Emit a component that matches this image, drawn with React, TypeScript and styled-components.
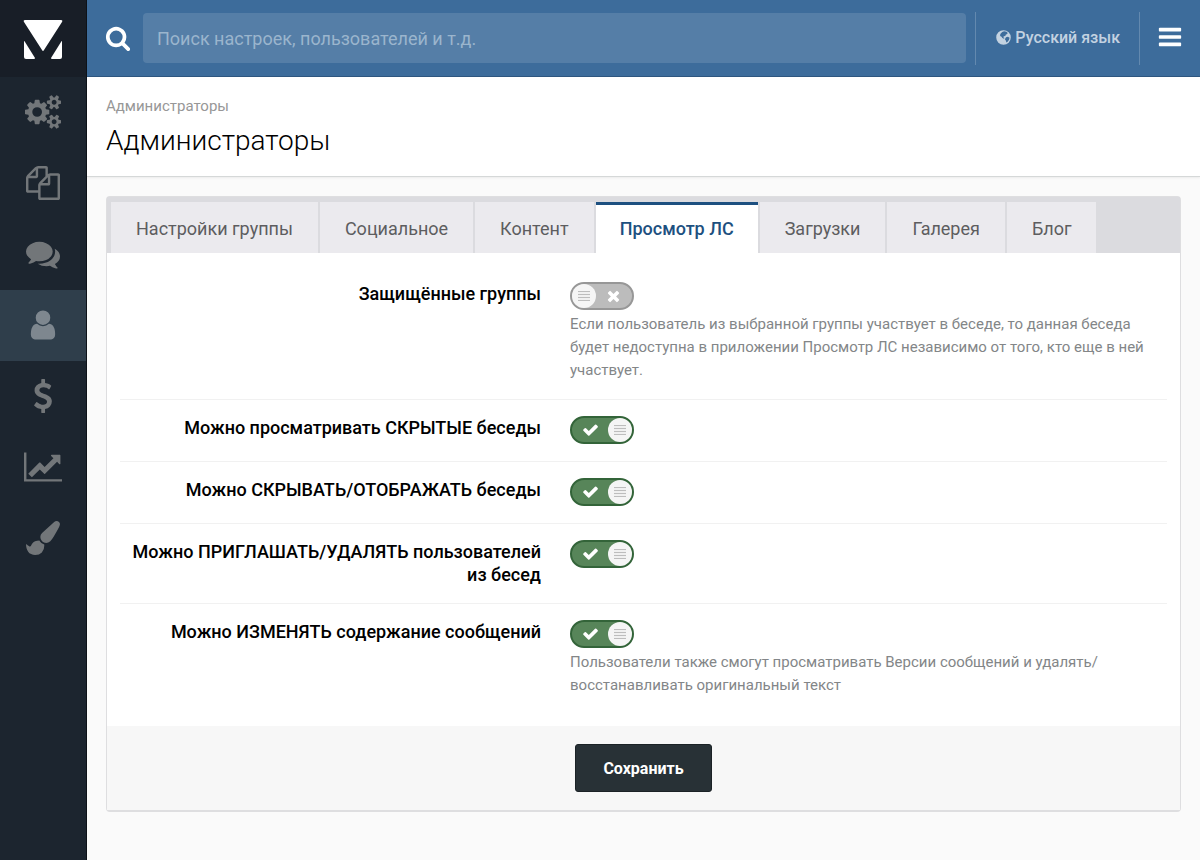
import React, { useState } from 'react';
import styled, { createGlobalStyle, css } from 'styled-components';

const GlobalStyle = createGlobalStyle`
  *, *::before, *::after { box-sizing: border-box; }
  body {
    margin: 0;
    background: #fafafa;
    color: #000;
    font-family: Roboto, "Noto Sans", sans-serif;
    font-size: 15px;
    line-height: 23px;
  }
  button, input { font-family: inherit; }
`;

type Glyph = { box: string; d: string };

const SQUARE = '0 0 1792 1792';

const glyphs: Record<string, Glyph> = {
  search: {
    box: SQUARE,
    d: 'M1216 832q0-185-131.5-316.5t-316.5-131.5-316.5 131.5-131.5 316.5 131.5 316.5 316.5 131.5 316.5-131.5 131.5-316.5zm512 832q0 52-38 90t-90 38q-54 0-90-38l-343-342q-179 124-399 124-143 0-273.5-55.5t-225-150-150-225-55.5-273.5 55.5-273.5 150-225 225-150 273.5-55.5 273.5 55.5 225 150 150 225 55.5 273.5q0 220-124 399l343 343q37 37 37 90z',
  },
  cogs: {
    box: '-64 0 1920 1792',
    d: 'M832 896q0-106-75-181t-181-75-181 75-75 181 75 181 181 75 181-75 75-181zm768 512q0-52-38-90t-90-38-90 38-38 90q0 53 37.5 90.5t90.5 37.5 90.5-37.5 37.5-90.5zm0-1024q0-52-38-90t-90-38-90 38-38 90q0 53 37.5 90.5t90.5 37.5 90.5-37.5 37.5-90.5zm-384 421v185q0 10-7 19.5t-16 10.5l-155 24q-11 35-32 76 34 48 90 115 7 11 7 20 0 12-7 19-23 30-82.5 89.5t-78.5 59.5q-11 0-21-7l-115-90q-37 19-77 31-11 108-23 155-7 24-30 24h-186q-11 0-20-7.5t-10-17.5l-23-153q-34-10-75-31l-118 89q-7 7-20 7-11 0-21-8-144-133-144-160 0-9 7-19 10-14 41-53t47-61q-23-44-35-82l-152-24q-10-1-17-9.5t-7-19.5v-185q0-10 7-19.5t16-10.5l155-24q11-35 32-76-34-48-90-115-7-11-7-20 0-12 7-20 22-30 82-89t79-59q11 0 21 7l115 90q34-18 77-32 11-108 23-154 7-24 30-24h186q11 0 20 7.5t10 17.5l23 153q34 10 75 31l118-89q8-7 20-7 11 0 21 8 144 133 144 160 0 8-7 19-12 16-42 54t-45 60q23 48 34 82l152 23q10 2 17 10.5t7 19.5zm640 533v140q0 16-149 31-12 27-30 52 51 113 51 138 0 4-4 7-122 71-124 71-8 0-46-47t-52-68q-20 2-30 2t-30-2q-14 21-52 68t-46 47q-2 0-124-71-4-3-4-7 0-25 51-138-18-25-30-52-149-15-149-31v-140q0-16 149-31 13-29 30-52-51-113-51-138 0-4 4-7 4-2 35-20t59-34 30-16q8 0 46 46.5t52 67.5q20-2 30-2t30 2q51-71 92-112l6-2q4 0 124 70 4 3 4 7 0 25-51 138 17 23 30 52 149 15 149 31zm0-1024v140q0 16-149 31-12 27-30 52 51 113 51 138 0 4-4 7-122 71-124 71-8 0-46-47t-52-68q-20 2-30 2t-30-2q-14 21-52 68t-46 47q-2 0-124-71-4-3-4-7 0-25 51-138-18-25-30-52-149-15-149-31v-140q0-16 149-31 13-29 30-52-51-113-51-138 0-4 4-7 4-2 35-20t59-34 30-16q8 0 46 46.5t52 67.5q20-2 30-2t30 2q51-71 92-112l6-2q4 0 124 70 4 3 4 7 0 25-51 138 17 23 30 52 149 15 149 31z',
  },
  files: {
    box: SQUARE,
    d: 'M1696 384q40 0 68 28t28 68v1216q0 40-28 68t-68 28h-960q-40 0-68-28t-28-68v-288h-544q-40 0-68-28t-28-68v-672q0-40 20-88t48-76l408-408q28-28 76-48t88-20h416q40 0 68 28t28 68v328q68-40 128-40h416zm-544 213l-299 299h299v-299zm-640-384l-299 299h299v-299zm196 647l316-316v-416h-384v416q0 40-28 68t-68 28h-416v640h512v-256q0-40 20-88t48-76zm956 804v-1152h-384v416q0 40-28 68t-68 28h-416v640h896z',
  },
  comments: {
    box: SQUARE,
    d: 'M1408 768q0 139-94 257t-256.5 186.5-353.5 68.5q-86 0-176-16-124 88-278 128-36 9-86 16h-3q-11 0-20.5-8t-11.5-21q-1-3-1-6.5t.5-6.5 2-6l2.5-5 3.5-5.5 4-5 4.5-5 4-4.5q5-6 23-25t26-29.5 22.5-29 25-38.5 20.5-44q-124-72-195-177t-71-224q0-139 94-257t256.5-186.5 353.5-68.5 353.5 68.5 256.5 186.5 94 257zm384 256q0 120-71 224.5t-195 176.5q10 24 20.5 44t25 38.5 22.5 29 26 29.5 23 25q1 1 4 4.5t4.5 5 4 5 3.5 5.5l2.5 5 2 6 .5 6.5-1 6.5q-3 14-13 22t-22 7q-50-7-86-16-154-40-278-128-90 16-176 16-271 0-472-132 58 4 88 4 161 0 309-45t264-129q125-92 192-212t67-254q0-77-23-152 129 71 204 178t75 230z',
  },
  user: {
    box: SQUARE,
    d: 'M1536 1399q0 109-62.5 187t-150.5 78h-854q-88 0-150.5-78t-62.5-187q0-85 8.5-160.5t31.5-152 58.5-131 94-89 134.5-34.5q131 128 313 128t313-128q76 0 134.5 34.5t94 89 58.5 131 31.5 152 8.5 160.5zm-256-887q0 159-112.5 271.5t-271.5 112.5-271.5-112.5-112.5-271.5 112.5-271.5 271.5-112.5 271.5 112.5 112.5 271.5z',
  },
  dollar: {
    box: SQUARE,
    d: 'M1362 1185q0 153-99.5 263.5t-258.5 136.5v175q0 14-9 23t-23 9h-135q-13 0-22.5-9.5t-9.5-22.5v-175q-66-9-127.5-31t-101.5-44.5-74-48-46.5-37.5-17.5-18q-17-21-2-41l103-135q7-10 23-12 15-2 24 9l2 2q113 99 243 125 37 8 74 8 81 0 142.5-43t61.5-122q0-28-15-53t-33.5-42-58.5-37.5-66-32-80-32.5q-39-16-61.5-25t-61.5-26.5-62.5-31-56.5-35.5-53.5-42.5-43.5-49-35.5-58-21-66.5-8.5-78q0-138 98-242t255-134v-180q0-13 9.5-22.5t22.5-9.5h135q14 0 23 9t9 23v176q57 6 110.5 23t87 33.5 63.5 37.5 39 29 15 14q17 18 5 38l-81 146q-8 15-23 16-14 3-27-7-3-3-14.5-12t-39-26.5-58.5-32-74.5-26-85.5-11.5q-95 0-155 43t-60 111q0 26 8.5 48t29.5 41.5 39.5 33 56 31 60.5 27 70 27.5q53 20 81 31.5t76 35 75.5 42.5 62 50 53 63.5 31.5 76.5 13 94z',
  },
  chart: {
    box: '0 0 2048 1792',
    d: 'M2048 1536v128h-2048v-1536h128v1408h1920zm-128-1248v435q0 21-19.5 29.5t-35.5-7.5l-121-121-633 633q-10 10-23 10t-23-10l-233-233-416 416-192-192 585-585q10-10 23-10t23 10l233 233 464-464-121-121q-16-16-7.5-35.5t29.5-19.5h435q14 0 23 9t9 23z',
  },
  brush: {
    box: SQUARE,
    d: 'M1615 0q70 0 122.5 46.5t52.5 116.5q0 63-45 151-332 629-465 752-97 91-218 91-126 0-216.5-92.5t-90.5-219.5q0-128 92-212l638-579q59-54 130-54zm-909 1034q39 76 106.5 130t150.5 76l1 71q4 213-129.5 347t-348.5 134q-123 0-218-46.5t-152.5-127.5-86.5-183-29-220q7 5 41 30t62 44.5 59 36.5 46 17q41 0 55-37 25-66 57.5-112.5t69.5-76 88-47.5 103-25.5 125-10.5z',
  },
  bars: {
    box: SQUARE,
    d: 'M1664 1344v128q0 26-19 45t-45 19h-1408q-26 0-45-19t-19-45v-128q0-26 19-45t45-19h1408q26 0 45 19t19 45zm0-512v128q0 26-19 45t-45 19h-1408q-26 0-45-19t-19-45v-128q0-26 19-45t45-19h1408q26 0 45 19t19 45zm0-512v128q0 26-19 45t-45 19h-1408q-26 0-45-19t-19-45v-128q0-26 19-45t45-19h1408q26 0 45 19t19 45z',
  },
  times: {
    box: '0 64 1792 1792',
    d: 'M1490 1322q0 40-28 68l-136 136q-28 28-68 28t-68-28l-294-294-294 294q-28 28-68 28t-68-28l-136-136q-28-28-28-68t28-68l294-294-294-294q-28-28-28-68t28-68l136-136q28-28 68-28t68 28l294 294 294-294q28-28 68-28t68 28l136 136q28 28 28 68t-28 68l-294 294 294 294q28 28 28 68z',
  },
  check: {
    box: '0 64 1792 1792',
    d: 'M1671 566q0 40-28 68l-724 724-136 136q-28 28-68 28t-68-28l-136-136-362-362q-28-28-28-68t28-68l136-136q28-28 68-28t68 28l294 295 656-657q28-28 68-28t68 28l136 136q28 28 28 68z',
  },
  globe: {
    box: SQUARE,
    d: 'M896 128a768 768 0 1 1 0 1536 768 768 0 1 1 0-1536zM760 310l200-70 250 50 130 120-60 130-150 60-40 130-160 40-60 110 120 60-40 80-170-60-90-130-150-100 20-190zM1160 880l200-50 170 90-50 220-150 200-130 70-60-200-100-140z',
  },
};

const Glyphic = styled.svg<{ $size: number }>`
  display: block;
  flex: none;
  height: ${(p) => p.$size}px;
  fill: currentColor;
  fill-rule: evenodd;
`;

function Icon({ name, size }: { name: string; size: number }) {
  const g = glyphs[name];
  return (
    <Glyphic $size={size} viewBox={g.box} aria-hidden="true">
      <path d={g.d} />
    </Glyphic>
  );
}

const Shell = styled.div`
  display: grid;
  grid-template-columns: 87px minmax(0, 1fr);
  min-height: 100vh;
`;

const Sidebar = styled.nav`
  display: flex;
  flex-direction: column;
  background: #1c252f;
  border-right: 1px solid #0d1218;
`;

const Logo = styled.a`
  display: flex;
  align-items: center;
  justify-content: center;
  height: 77px;
  padding-top: 2px;
  background: #181e27;
`;

const NavItem = styled.a<{ $active?: boolean }>`
  display: flex;
  align-items: center;
  justify-content: center;
  height: 71px;
  padding-bottom: 2px;
  color: ${(p) => (p.$active ? '#7e878f' : '#727679')};
  background: ${(p) => (p.$active ? '#2f3e4b' : 'transparent')};
`;

const Main = styled.div`
  display: flex;
  flex-direction: column;
  min-width: 0;
`;

const TopBar = styled.header`
  display: flex;
  align-items: center;
  height: 77px;
  padding-left: 18px;
  background: #3d6c9b;
  border-bottom: 1px solid #2f5780;
`;

const SearchForm = styled.form`
  display: flex;
  flex: 1;
  align-items: center;
  gap: 12px;
  margin-right: 9px;
  color: #fff;
`;

const SearchInput = styled.input`
  flex: 1;
  min-width: 0;
  height: 50px;
  padding: 0 14px;
  border: 0;
  border-radius: 4px;
  background: #557ea7;
  color: #fff;
  font-size: 18px;
  &::placeholder { color: #9bb5cd; opacity: 1; }
`;

const BarButton = styled.button`
  display: flex;
  align-items: center;
  justify-content: center;
  gap: 3px;
  height: 53px;
  padding: 0 17px 2px;
  border: 0;
  border-left: 1px solid #6389af;
  background: none;
  color: #fff;
`;

const LanguageButton = styled(BarButton)`
  padding: 0 19px 2px;
  color: #c3d2e1;
  font-size: 16px;
  font-weight: 500;
`;

const PageHead = styled.div`
  padding: 18px 19px;
  background: #fff;
  border-bottom: 1px solid #d5d8d8;
  box-shadow: 0 1px 2px rgba(0, 0, 0, 0.06);
`;

const Crumb = styled.div`
  color: #979797;
`;

const Title = styled.h1`
  margin: 6px 0 0;
  font-size: 28px;
  font-weight: 300;
  line-height: 34px;
`;

const Card = styled.form`
  margin: 19px 19px 48px;
  border: 1px solid #dedee0;
  border-bottom-width: 2px;
  border-radius: 4px;
  background: #fff;
`;

const Tabs = styled.div`
  display: flex;
  padding: 5px 0 0 4px;
  background: #dbdbdf;
`;

const Tab = styled.button<{ $active: boolean }>`
  height: 51px;
  padding: 2px 25px 0;
  border: 0;
  border-right: 2px solid #dbdbdf;
  background: #ebeaee;
  color: #5d5d5f;
  font-size: 18px;
  white-space: nowrap;
  ${(p) =>
    p.$active &&
    css`
      padding: 2px 24px 0;
      background: #fff;
      color: #1d5080;
      font-weight: 500;
      box-shadow: inset 0 3px #1d5080;
    `}
`;

const Fields = styled.div`
  padding: 13px 13px 12px;
`;

const Row = styled.div`
  display: grid;
  grid-template-columns: 421px minmax(0, 1fr);
  column-gap: 29px;
  padding: 16px 0 17px;
  & + & { border-top: 1px solid #f1f1f1; }
`;

const RowLabel = styled.label`
  color: #000;
  font-size: 18px;
  font-weight: 500;
  text-align: right;
`;

const Help = styled.p`
  margin: 3px 0 0;
  color: #838688;
`;

const Switch = styled.span<{ $on: boolean }>`
  position: relative;
  display: flex;
  flex-direction: ${(p) => (p.$on ? 'row' : 'row-reverse')};
  align-items: center;
  justify-content: space-between;
  width: 64px;
  height: 28px;
  padding: ${(p) => (p.$on ? '0 0 0 10px' : '0 10px 0 0')};
  border: 2px solid ${(p) => (p.$on ? '#336439' : '#979797')};
  border-radius: 14px;
  background: ${(p) => (p.$on ? '#578559' : '#bcbcbc')};
  color: #fff;
`;

const SwitchInput = styled.input`
  position: absolute;
  inset: 0;
  width: 100%;
  height: 100%;
  margin: 0;
  opacity: 0;
  cursor: pointer;
`;

const Knob = styled.span`
  display: flex;
  align-items: center;
  justify-content: center;
  width: 24px;
  height: 24px;
  border-radius: 50%;
  background: #f5f5f5;
`;

const Grip = styled.span`
  width: 12px;
  height: 10px;
  background: repeating-linear-gradient(#bdbdbd 0 1px, #f0f0f0 1px 3px);
`;

const Footer = styled.div`
  display: flex;
  justify-content: center;
  padding: 18px 0;
  background: #f7f7f7;
`;

const SaveButton = styled.button`
  height: 48px;
  padding: 0 27px;
  border: 1px solid #1b2226;
  border-radius: 3px;
  background: #283136;
  color: #fff;
  font-size: 16px;
  font-weight: 700;
`;

const nav = [
  ['cogs', 'Система'],
  ['files', 'Контент'],
  ['comments', 'Сообщество'],
  ['user', 'Пользователи'],
  ['dollar', 'Коммерция'],
  ['chart', 'Статистика'],
  ['brush', 'Внешний вид'],
];

const tabs = ['Настройки группы', 'Социальное', 'Контент', 'Просмотр ЛС', 'Загрузки', 'Галерея', 'Блог'];

const fields = [
  {
    id: 'protected',
    label: 'Защищённые группы',
    on: false,
    help: 'Если пользователь из выбранной группы участвует в беседе, то данная беседа будет недоступна в приложении Просмотр ЛС независимо от того, кто еще в ней участвует.',
  },
  { id: 'view', label: 'Можно просматривать СКРЫТЫЕ беседы', on: true },
  { id: 'hide', label: 'Можно СКРЫВАТЬ/ОТОБРАЖАТЬ беседы', on: true },
  { id: 'invite', label: 'Можно ПРИГЛАШАТЬ/УДАЛЯТЬ пользователей из бесед', on: true },
  {
    id: 'edit',
    label: 'Можно ИЗМЕНЯТЬ содержание сообщений',
    on: true,
    help: 'Пользователи также смогут просматривать Версии сообщений и удалять/восстанавливать оригинальный текст',
  },
];

function Toggle({ id, initial }: { id: string; initial: boolean }) {
  const [on, setOn] = useState(initial);
  return (
    <Switch $on={on}>
      <Icon name={on ? 'check' : 'times'} size={17} />
      <Knob>
        <Grip />
      </Knob>
      <SwitchInput id={id} type="checkbox" checked={on} onChange={() => setOn(!on)} />
    </Switch>
  );
}

export default function App() {
  const [tab, setTab] = useState(3);
  return (
    <>
      <GlobalStyle />
      <Shell>
        <Sidebar>
          <Logo href="#" aria-label="Главная">
            <svg width="40" height="40" viewBox="0 0 40 40" fill="#fff" aria-hidden="true">
              <path d="M2 0h36q2 0 1 2L21 30q-1 2-2 0L1 2Q0 0 2 0z" />
              <path d="M1 22q0-2 1 0l10 16q0 1-1 1H3q-2 0-2-2z" />
              <path d="M39 22q0-2-1 0L28 38q0 1 1 1h8q2 0 2-2z" />
            </svg>
          </Logo>
          {nav.map(([name, label]) => (
            <NavItem key={name} href="#" aria-label={label} $active={name === 'user'}>
              <Icon name={name} size={34} />
            </NavItem>
          ))}
        </Sidebar>
        <Main>
          <TopBar>
            <SearchForm>
              <Icon name="search" size={26} />
              <SearchInput type="search" aria-label="Поиск" placeholder="Поиск настроек, пользователей и т.д." />
            </SearchForm>
            <LanguageButton type="button">
              <Icon name="globe" size={17} />
              Русский язык
            </LanguageButton>
            <BarButton type="button" aria-label="Меню">
              <Icon name="bars" size={26} />
            </BarButton>
          </TopBar>
          <PageHead>
            <Crumb>Администраторы</Crumb>
            <Title>Администраторы</Title>
          </PageHead>
          <Card>
            <Tabs role="tablist">
              {tabs.map((name, i) => (
                <Tab key={name} type="button" role="tab" aria-selected={i === tab} $active={i === tab} onClick={() => setTab(i)}>
                  {name}
                </Tab>
              ))}
            </Tabs>
            <Fields>
              {fields.map((f) => (
                <Row key={f.id}>
                  <RowLabel htmlFor={f.id}>{f.label}</RowLabel>
                  <div>
                    <Toggle id={f.id} initial={f.on} />
                    {f.help && <Help>{f.help}</Help>}
                  </div>
                </Row>
              ))}
            </Fields>
            <Footer>
              <SaveButton type="button">Сохранить</SaveButton>
            </Footer>
          </Card>
        </Main>
      </Shell>
    </>
  );
}
